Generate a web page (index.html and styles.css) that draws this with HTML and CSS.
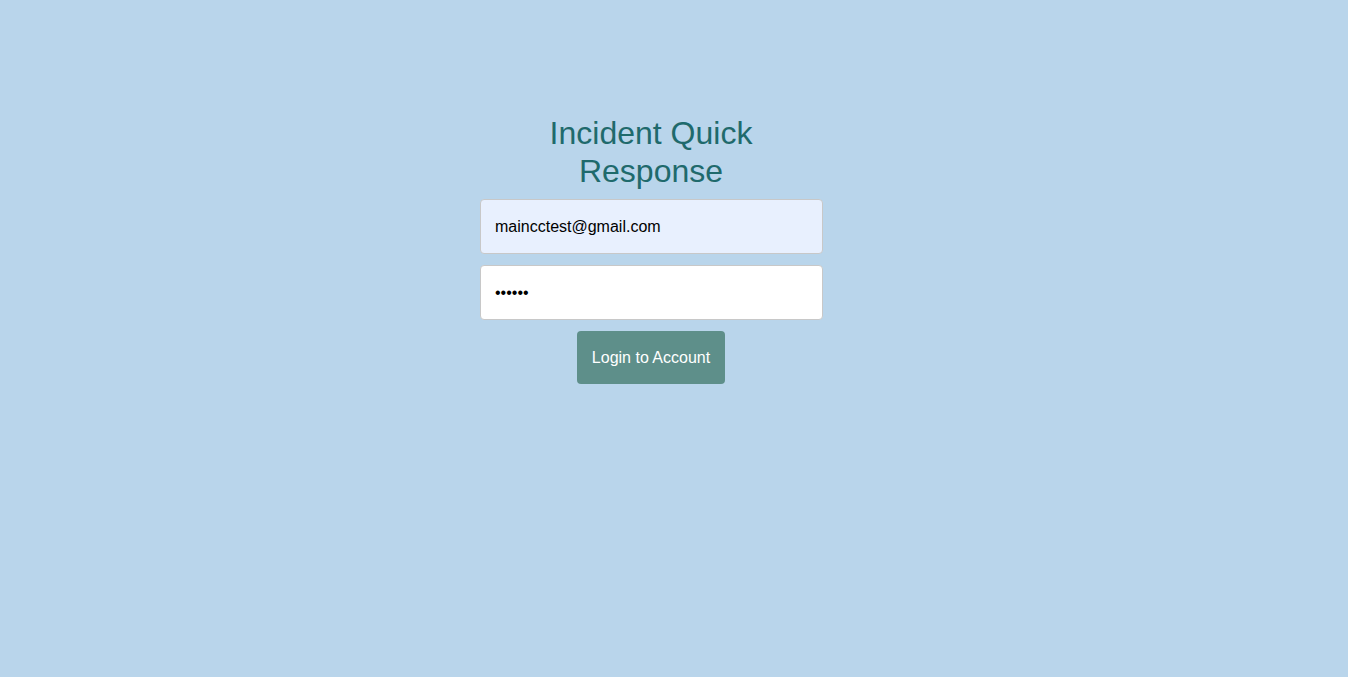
FILE: index.html
```html
<!DOCTYPE html>
<html>
<head>
<meta charset="utf-8">
<link rel="stylesheet" href="styles.css">
</head>
<body>
<div class="page">
  <form class="login">
    <h1 class="title">Incident Quick Response</h1>
    <input class="field field-email" type="email" value="maincctest@gmail.com">
    <input class="field" type="password" value="123456">
    <button class="btn" type="button">Login to Account</button>
  </form>
</div>
</body>
</html>
```
FILE: styles.css
```css
html, body {
  margin: 0;
  padding: 0;
  height: 100%;
  background: #b9d5eb;
  font-family: "Liberation Sans", Arial, sans-serif;
}
.page {
  display: flex;
  justify-content: center;
  padding-right: 46px;
  padding-top: 114px;
}
.login {
  width: 342px;
  display: flex;
  flex-direction: column;
  align-items: center;
}
.title {
  margin: 0 0 9px;
  font-size: 32px;
  line-height: 38px;
  font-weight: normal;
  color: #1f6a6c;
  text-align: center;
  width: 300px;
}
.field {
  box-sizing: border-box;
  align-self: flex-start;
  width: 343px;
  height: 55px;
  margin: 0 0 11px;
  padding: 0 14px;
  border: 1px solid #c8c8c8;
  border-radius: 4px;
  background: #ffffff;
  font-family: "Liberation Sans", Arial, sans-serif;
  font-size: 16px;
  color: #000;
  outline: none;
}
.field-email {
  background: #e8f0fe;
}
.btn {
  width: 148px;
  height: 53px;
  border: none;
  border-radius: 4px;
  background: #5e8f8a;
  color: #fff;
  font-family: "Liberation Sans", Arial, sans-serif;
  font-size: 16px;
  padding: 0;
  cursor: pointer;
}
```
